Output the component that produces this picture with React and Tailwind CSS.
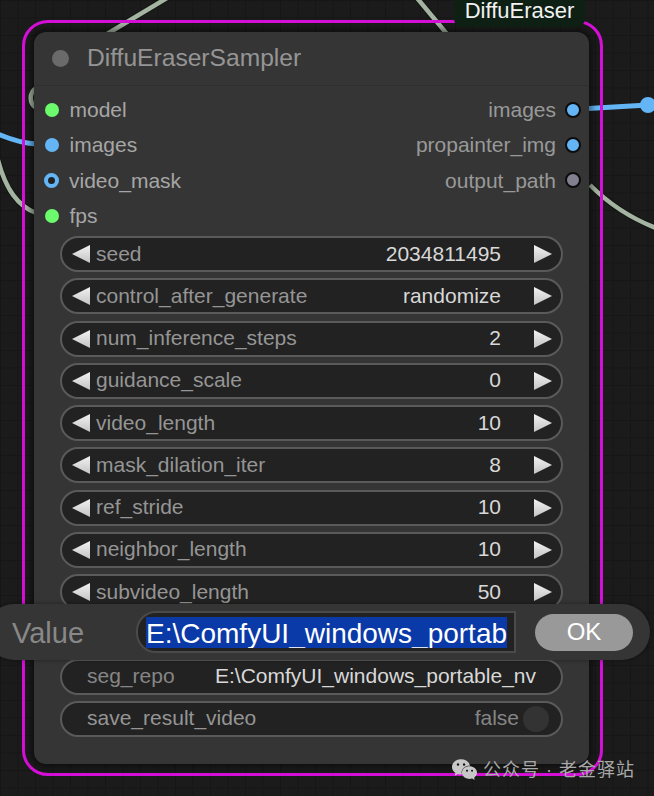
import React from "react";
import { SiWechat } from "react-icons/si";

const inputs = [
  { n: "model", c: "bg-[#6cfb6c]" },
  { n: "images", c: "bg-[#64b5f6]" },
  { n: "video_mask", ring: true },
  { n: "fps", c: "bg-[#6cfb6c]" },
];
const outputs = [
  { n: "images", c: "bg-[#64b5f6]" },
  { n: "propainter_img", c: "bg-[#64b5f6]" },
  { n: "output_path", c: "bg-[#82808f]" },
];
const nums = [
  ["seed", "2034811495"],
  ["control_after_generate", "randomize"],
  ["num_inference_steps", "2"],
  ["guidance_scale", "0"],
  ["video_length", "10"],
  ["mask_dilation_iter", "8"],
  ["ref_stride", "10"],
  ["neighbor_length", "10"],
  ["subvideo_length", "50"],
];

function Arrow({ right }) {
  return (
    <svg width="18" height="18" viewBox="0 0 18 18" className="shrink-0">
      <defs>
        <linearGradient id={right ? "ar" : "al"} x1="0" y1="0" x2="0" y2="1">
          <stop offset="0" stopColor="#f2f2f2" />
          <stop offset="1" stopColor="#c4c4c4" />
        </linearGradient>
      </defs>
      <polygon points={right ? "0,0 18,9 0,18" : "18,0 0,9 18,18"} fill={`url(#${right ? "ar" : "al"})`} />
    </svg>
  );
}

function Pill({ children }) {
  return (
    <div className="ml-[26px] mb-[6.25px] flex h-[36px] w-[503px] items-center rounded-full border-2 border-[#5a5a5a] bg-[#222222] text-[21px] leading-none">
      {children}
    </div>
  );
}

function NumRow({ label, value }) {
  return (
    <Pill>
      <div className="ml-[10px]"><Arrow /></div>
      <span className="ml-[6px] -translate-y-[1.5px] text-[#959595]">{label}</span>
      <span className="ml-auto -translate-y-[1.5px] text-[#d8d8d8]">{value}</span>
      <div className="ml-[33px] mr-[9px]"><Arrow right /></div>
    </Pill>
  );
}

export default function App() {
  return (
    <div
      className="relative h-[796px] w-[654px] overflow-hidden bg-[#1b1b1b] bg-[linear-gradient(#161616_1px,transparent_1px),linear-gradient(90deg,#161616_1px,transparent_1px)] bg-[size:17.5px_17.5px] pl-[34px] pt-[32px]"
      style={{ fontFamily: '"Liberation Sans", Arial, sans-serif' }}
    >
      {/* wires */}
      <svg className="absolute left-0 top-0" width="654" height="796" fill="none">
        <g stroke="#0f0f0f" strokeWidth="6.5" strokeOpacity="0.7">
          <path d="M107 34 L167 -2" />
          <path d="M417 -2 L447 34" />
          <path d="M-2 160 C6 190 18 206 36 213" />
          <path d="M590 185 C610 205 630 218 656 228" />
        </g>
        <g stroke="#a3b4a0" strokeWidth="4.5">
          <path d="M107 34 L167 -2" />
          <path d="M417 -2 L447 34" />
          <path d="M36 108 C29 103 29 93 36 88" />
          <path d="M-2 160 C6 190 18 206 36 213" />
          <path d="M590 185 C610 205 630 218 656 228" />
        </g>
        <path d="M-2 134 C12 140 22 143 36 144" stroke="#64b5f6" strokeWidth="5" />
        <path d="M588 108.5 L648 105" stroke="#64b5f6" strokeWidth="5" />
        <circle cx="648" cy="105" r="8" fill="#64b5f6" />
      </svg>

      {/* selection frame */}
      <div className="absolute left-[22px] top-[20px] h-[756px] w-[581px] rounded-[26px] border-[3.5px] border-[#d40fd6]" />

      {/* node */}
      <div className="relative h-[732px] w-[555px] rounded-[12px] bg-[#353535] shadow-[0_0_6px_3px_rgba(0,0,0,0.45)]">
        <div className="flex h-[54px] items-center border-b border-[#2e2e2e] pl-[18px]">
          <div className="h-[17px] w-[17px] rounded-full bg-[#6a6a6a]" />
          <span className="ml-[18px] text-[24.6px] leading-none text-[#959595]">DiffuEraserSampler</span>
        </div>

        <div className="flex h-[147px] justify-between pt-[6px]">
          <div>
            {inputs.map((s) => (
              <div key={s.n} className="flex h-[35.3px] items-center pl-[11px] text-[21px] leading-none text-[#a6a6a6]">
                {s.ring ? (
                  <div className="-ml-px h-[15px] w-[15px] rounded-full border-[4px] border-[#64b5f6] bg-[#222222]" />
                ) : (
                  <div className={`h-[14px] w-[14px] rounded-full ${s.c}`} />
                )}
                <span className={s.ring ? "ml-[10px]" : "ml-[10.5px]"}>{s.n}</span>
              </div>
            ))}
          </div>
          <div>
            {outputs.map((s) => (
              <div key={s.n} className="flex h-[35.3px] items-center justify-end pr-[8px] text-[21px] leading-none text-[#999999]">
                <span className="mr-[9px]">{s.n}</span>
                <div className={`h-[16px] w-[16px] rounded-full border-2 border-[#0c0c0c] ${s.c}`} />
              </div>
            ))}
          </div>
        </div>

        <div className="mt-[3px]">
          {nums.map(([l, v]) => (
            <NumRow key={l} label={l} value={v} />
          ))}
          <Pill />
          <Pill>
            <span className="ml-[25px] -translate-y-[1px] text-[#868686]">seg_repo</span>
            <span className="ml-auto mr-[25px] -translate-y-[1px] text-[#d8d8d8]">E:\ComfyUI_windows_portable_nv</span>
          </Pill>
          <Pill>
            <span className="ml-[25px] -translate-y-[1px] text-[#959595]">save_result_video</span>
            <span className="ml-auto -translate-y-[1px] text-[#868686]">false</span>
            <div className="ml-[4px] mr-[12px] h-[26px] w-[26px] rounded-full bg-[#333333]" />
          </Pill>
        </div>
      </div>

      {/* group title badge */}
      <div className="absolute left-[454px] top-0 flex h-[27px] w-[131px] items-start justify-center rounded-b-[8px] bg-[#0e1f14] text-[22px] leading-[22px] text-[#f2f2f2]">
        DiffuEraser
      </div>

      {/* prompt dialog */}
      <div className="absolute left-[-14px] top-[604px] flex h-[56px] w-[664px] items-center rounded-[28px] bg-[#353535] shadow-[0_0_4px_rgba(0,0,0,0.4)]">
        <span className="ml-[26px] w-[124px] translate-y-[1px] text-[29px] leading-none text-[#888888]">Value</span>
        <div className="flex h-[42px] w-[380px] items-center overflow-hidden rounded-l-[20px] border-2 border-[#4a4a4a] bg-[#222222] pl-[8px]">
          <div className="h-[31px] w-[361px] overflow-hidden whitespace-nowrap bg-[#0a39a8] text-[28px] leading-[33px] text-white">
            E:\ComfyUI_windows_portab
          </div>
        </div>
        <div className="ml-[19px] flex h-[37px] w-[98px] items-center justify-center rounded-full bg-[#999999] text-[24px] leading-[26px] text-white">
          OK
        </div>
      </div>

      {/* watermark */}
      <div
        className="absolute left-[452px] top-[757px] flex items-center text-[#a9a9a9]"
        style={{ fontFamily: '"Liberation Sans", "Noto Sans CJK SC", sans-serif' }}
      >
        <SiWechat size={25} color="#c8c8c8" />
        <span className="ml-[6px] whitespace-nowrap text-[18px] leading-[24px] tracking-[1px]">公众号 · 老金驿站</span>
      </div>
    </div>
  );
}
